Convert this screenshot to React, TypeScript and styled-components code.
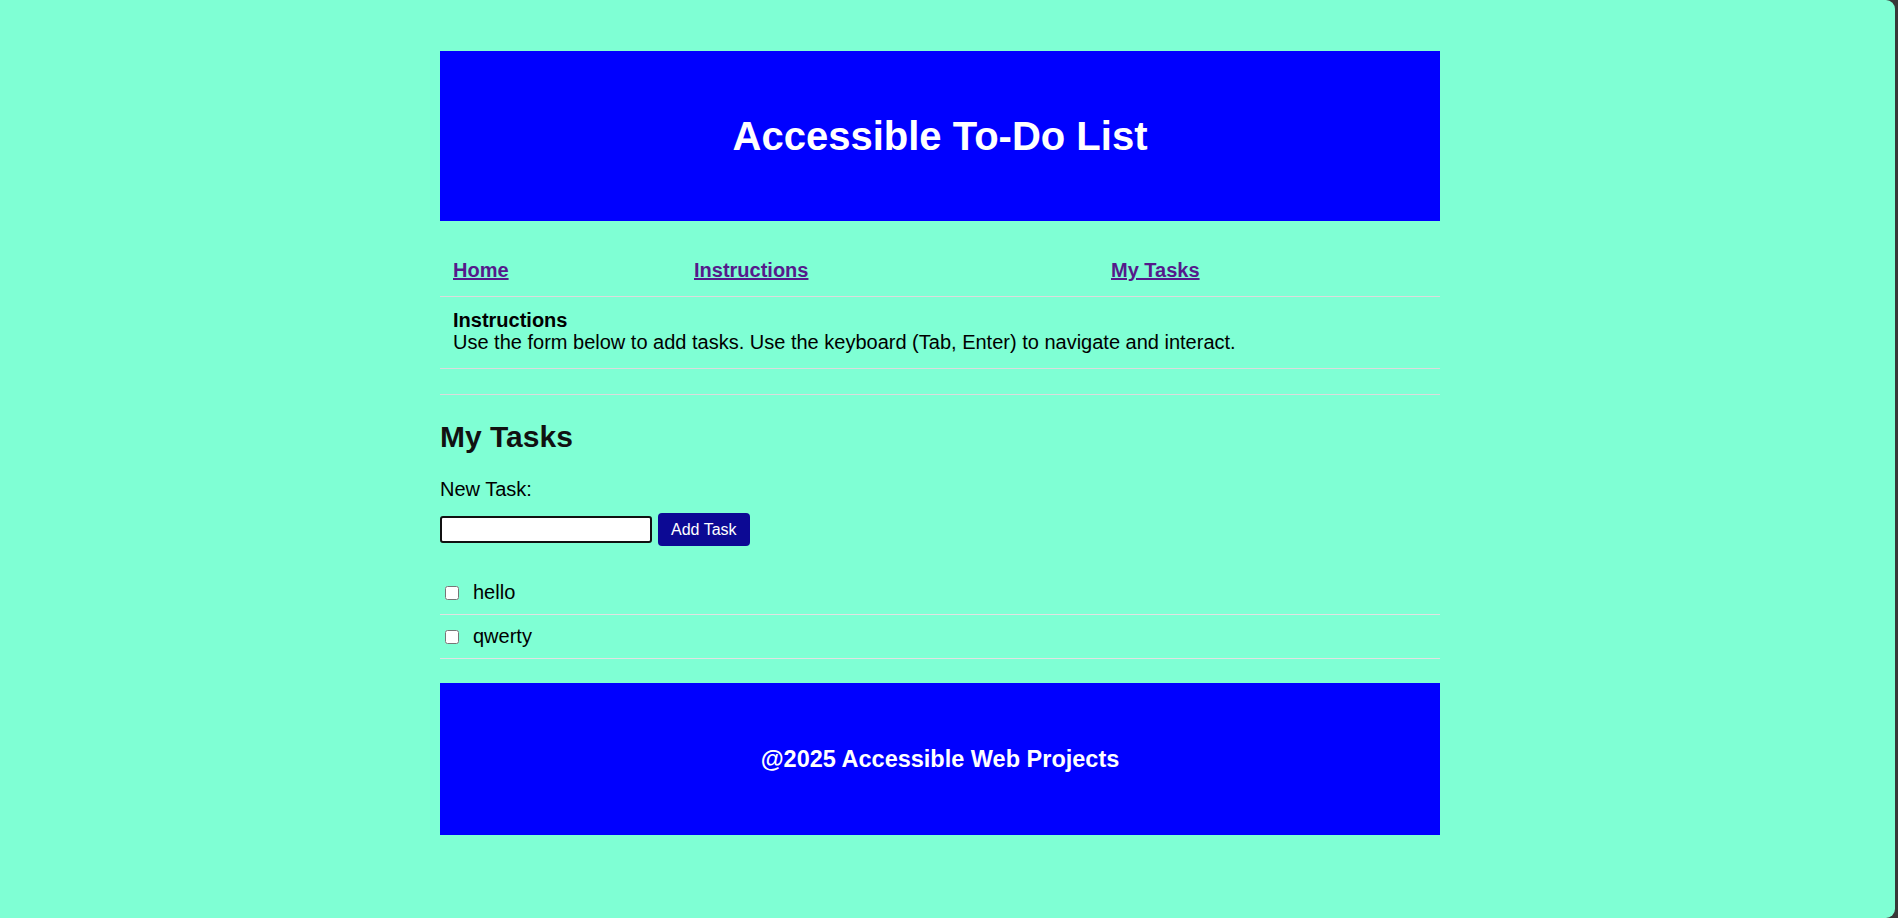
import React, { useState } from "react";
import styled, { createGlobalStyle } from "styled-components";

const GlobalStyle = createGlobalStyle`
  html {
    background: #383838;
  }
  body {
    margin: 0;
    font-family: "Liberation Sans", Arial, sans-serif;
    font-size: 20px;
    color: #000;
  }
`;

const initialTasks = ["hello", "qwerty"];

function App() {
  const [value, setValue] = useState("");
  const [tasks, setTasks] = useState(initialTasks);

  const handleChange = (e: React.ChangeEvent<HTMLInputElement>) => {
    setValue(e.target.value);
  };

  const handleClick = () => {
    if (!value.trim()) return;
    setTasks([...tasks, value.trim()]);
    setValue("");
  };

  return (
    <Page>
      <GlobalStyle />
      <Main>
        <Header>
          <Title>Accessible To-Do List</Title>
        </Header>

        <InfoTable>
          <NavCell>
            <NavLink href="#home">Home</NavLink>
          </NavCell>
          <NavCell>
            <NavLink href="#instructions">Instructions</NavLink>
          </NavCell>
          <NavCell>
            <NavLink href="#tasks">My Tasks</NavLink>
          </NavCell>
          <InstructionsCell>
            <strong>Instructions</strong>
            <br />
            Use the form below to add tasks. Use the keyboard (Tab, Enter) to
            navigate and interact.
          </InstructionsCell>
          <EmptyCell />
        </InfoTable>

        <TasksSection>
          <SectionTitle>My Tasks</SectionTitle>
          <FieldLabel htmlFor="new-task">New Task:</FieldLabel>
          <FormRow>
            <TaskInput id="new-task" value={value} onChange={handleChange} />
            <AddButton onClick={handleClick}>Add Task</AddButton>
          </FormRow>
          <TaskList>
            {tasks.map((task) => (
              <TaskItem key={task}>
                <Checkbox type="checkbox" aria-label={task} />
                <span>{task}</span>
              </TaskItem>
            ))}
          </TaskList>
        </TasksSection>

        <Footer>
          <FooterText>@2025 Accessible Web Projects</FooterText>
        </Footer>
      </Main>
    </Page>
  );
}

const Page = styled.div`
  box-sizing: border-box;
  width: calc(100% - 3px);
  min-height: 100vh;
  padding: 51px 15px 0 0;
  background: #7fffd4;
  border-radius: 0 9px 9px 0;
`;

const Main = styled.div`
  width: 1000px;
  margin: 0 auto;
`;

const Header = styled.header`
  height: 170px;
  display: flex;
  align-items: center;
  justify-content: center;
  background: #0000ff;
`;

const Title = styled.h1`
  margin: 0;
  color: #fff;
  font-size: 40px;
  font-weight: bold;
`;

const InfoTable = styled.div`
  margin-top: 24px;
  display: grid;
  grid-template-columns: 241px 417px 1fr;
`;

const NavCell = styled.div`
  padding: 14px 13px;
  line-height: 23px;
  border-bottom: 1px solid #dcdcdc;
`;

const NavLink = styled.a`
  color: #551a8b;
  font-weight: bold;
  text-decoration: underline;
`;

const InstructionsCell = styled.div`
  grid-column: 1 / -1;
  padding: 12px 13px 15px;
  line-height: 22px;
  border-bottom: 1px solid #dcdcdc;
`;

const EmptyCell = styled.div`
  grid-column: 1 / -1;
  height: 25px;
  border-bottom: 1px solid #dcdcdc;
`;

const TasksSection = styled.section`
  padding-top: 25px;
`;

const SectionTitle = styled.h2`
  margin: 0 0 24px;
  font-size: 30px;
  line-height: 34px;
  color: #111;
`;

const FieldLabel = styled.label`
  display: block;
  margin-bottom: 12px;
  line-height: 23px;
`;

const FormRow = styled.div`
  display: flex;
  align-items: center;
  gap: 6px;
`;

const TaskInput = styled.input`
  box-sizing: border-box;
  width: 212px;
  height: 27px;
  border: 2px solid #111;
  border-radius: 3px;
  background: #fff;
  font-size: 16px;
`;

const AddButton = styled.button`
  padding: 7px 13px;
  border: none;
  border-radius: 4px;
  background: #0c0994;
  color: #fff;
  font-family: inherit;
  font-size: 16px;
  line-height: 19px;
  cursor: pointer;
`;

const TaskList = styled.ul`
  list-style: none;
  margin: 25px 0 0;
  padding: 0;
`;

const TaskItem = styled.li`
  display: flex;
  align-items: center;
  padding: 10px 0;
  line-height: 23px;
  border-bottom: 1px solid #e2e2e2;
`;

const Checkbox = styled.input`
  width: 14px;
  height: 14px;
  margin: 0 14px 0 5px;
`;

const Footer = styled.footer`
  margin-top: 24px;
  height: 152px;
  display: flex;
  align-items: center;
  justify-content: center;
  background: #0000ff;
`;

const FooterText = styled.p`
  margin: 0;
  color: #fff;
  font-size: 23.5px;
  font-weight: bold;
`;

export default App;
